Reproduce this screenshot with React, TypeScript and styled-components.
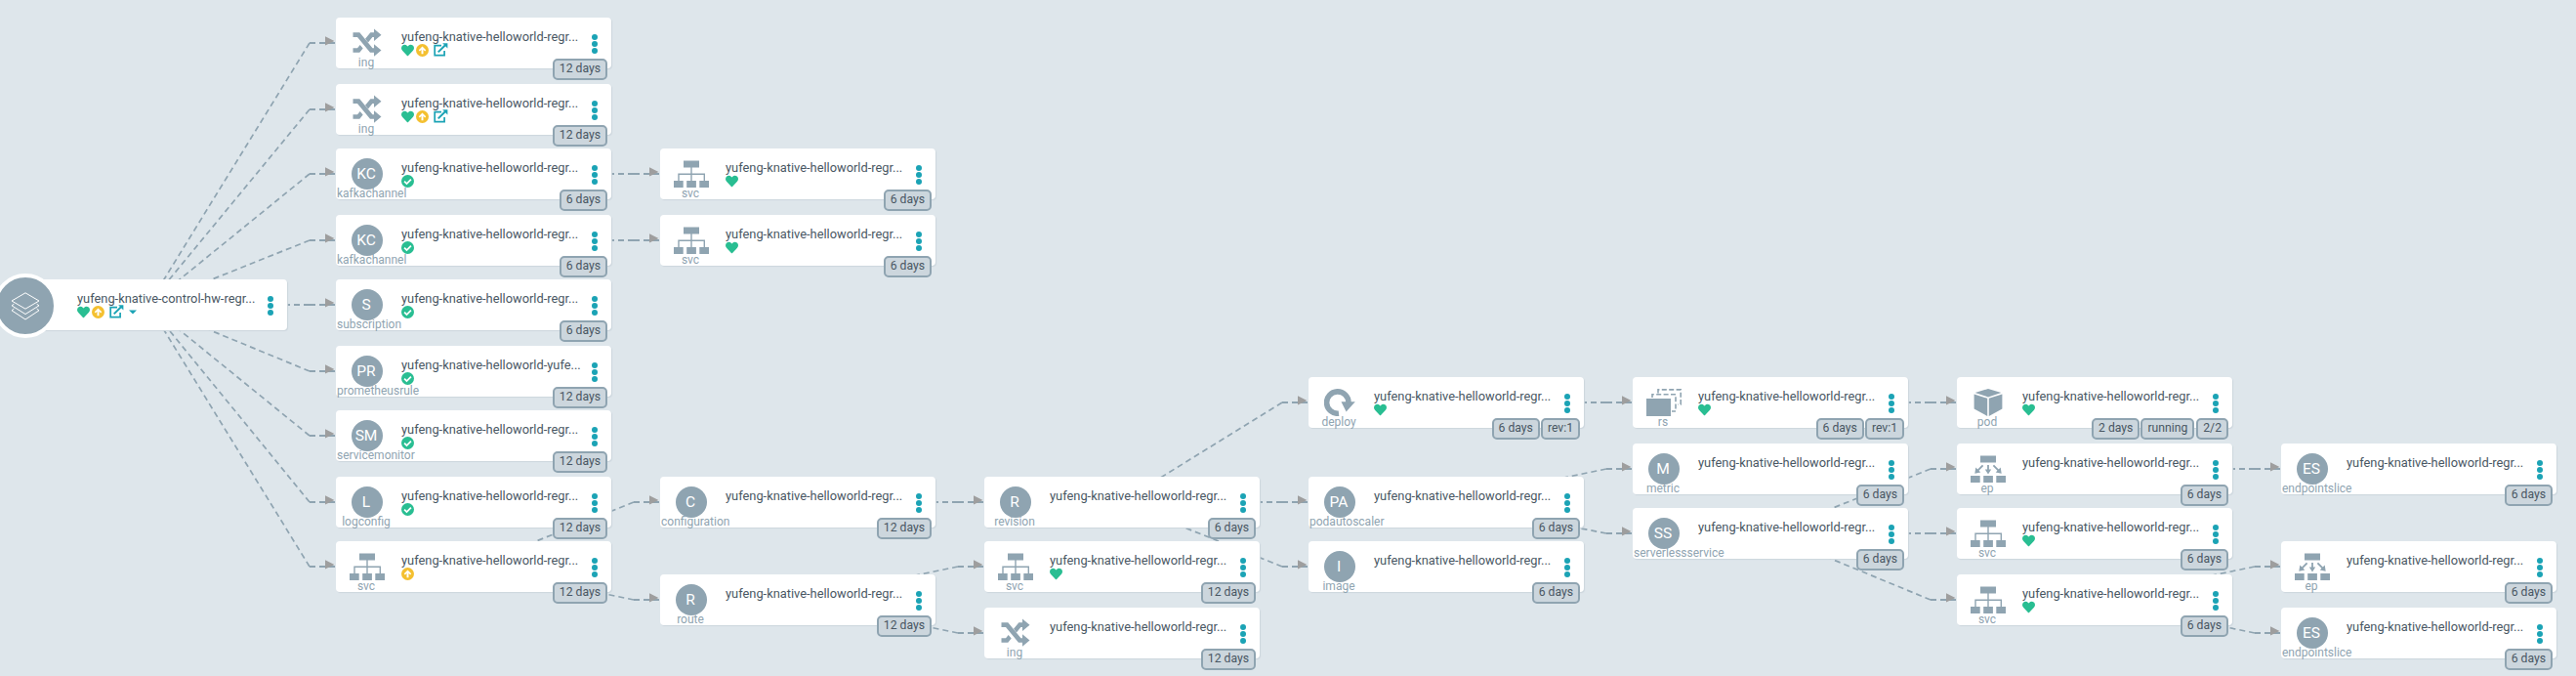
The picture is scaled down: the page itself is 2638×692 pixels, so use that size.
import React from "react";
import styled, { createGlobalStyle } from "styled-components";

const Global = createGlobalStyle`
  * { box-sizing: border-box; }
  html, body { margin: 0; padding: 0; background: #dee6eb; overflow: hidden; }
`;

const SLATE = "#8fa4b1";
const TEAL = "#1ba3b5";

const Canvas = styled.main`
  position: relative;
  width: 2638px;
  height: 692px;
  background: #dee6eb;
  font-family: Roboto, "Liberation Sans", sans-serif;
  overflow: hidden;
`;

const EdgeLayer = styled.svg`
  position: absolute;
  inset: 0;
  display: block;
`;

const Card = styled.article<{ $x: number; $y: number }>`
  position: absolute;
  left: ${(p) => p.$x}px;
  top: ${(p) => p.$y}px;
  width: 282px;
  height: 52px;
  display: flex;
  background: #fff;
  border-radius: 4px;
  box-shadow: 1px 1px 1px #ccd6dd;
`;

const KindColumn = styled.div`
  width: 60px;
  margin-left: 1px;
  padding-top: 10px;
  flex: none;
  display: flex;
  flex-direction: column;
  align-items: center;
`;

const IconSlot = styled.div`
  width: 36px;
  height: 32px;
  margin-left: 2px;
  flex: none;
  display: flex;
  align-items: center;
  justify-content: center;
`;

const Initials = styled.span`
  width: 32px;
  height: 32px;
  padding-right: 2px;
  border-radius: 50%;
  background: ${SLATE};
  color: #fff;
  font-size: 15.5px;
  line-height: 33px;
  text-align: center;
`;

const KindLabel = styled.span`
  max-width: 60px;
  margin-top: -3px;
  font-size: 12px;
  line-height: 14px;
  white-space: nowrap;
  color: ${SLATE};
`;

const RootDisc = styled.div`
  position: absolute;
  left: -19px;
  top: -6px;
  width: 66px;
  height: 66px;
  border: 4px solid #fff;
  border-radius: 50%;
  background: ${SLATE};
  display: flex;
  align-items: center;
  justify-content: center;
`;

const Body = styled.div<{ $root?: boolean }>`
  width: 190px;
  margin-left: ${(p) => (p.$root ? 67 : 6)}px;
  padding-top: 12px;
`;

const Name = styled.div`
  font-size: 12.85px;
  line-height: 16px;
  white-space: nowrap;
  color: #495763;
`;

const StatusRow = styled.div`
  height: 14px;
  margin-top: -2px;
  display: flex;
  align-items: center;
  gap: 2px;
`;

const MenuDots = styled.div`
  margin: 17px 0 0 5px;
  width: 6px;
  display: flex;
  flex-direction: column;
  gap: 1px;
`;

const Dot = styled.i`
  width: 6px;
  height: 6px;
  border-radius: 50%;
  background: ${TEAL};
`;

const Badges = styled.div`
  position: absolute;
  right: 4px;
  top: 42px;
  display: flex;
  gap: 1px;
`;

const Badge = styled.span<{ $spaced?: boolean }>`
  height: 22px;
  padding: 0 5px;
  margin-left: ${(p) => (p.$spaced ? 1 : 0)}px;
  border: 2px solid ${SLATE};
  border-radius: 5px;
  background: #ccd6dd;
  color: #495763;
  font-size: 12.2px;
  line-height: 16px;
  white-space: nowrap;
`;

const Heart = () => (
  <svg width="13" height="13" viewBox="0 0 512 512" fill="#29be92">
    <path d="M462 62c-55-47-136-38-186 14l-20 20-20-20C186 24 105 15 50 62c-63 54-66 150-10 208l194 200c12 13 32 13 44 0l194-200c56-58 53-154-10-208z" />
  </svg>
);

const Synced = () => (
  <svg width="13" height="13" viewBox="0 0 16 16">
    <circle cx="8" cy="8" r="8" fill="#29be92" />
    <path d="M3.8 8.2l3 3 5.4-5.4" fill="none" stroke="#fff" strokeWidth="2.2" />
  </svg>
);

const OutOfSync = () => (
  <svg width="13" height="13" viewBox="0 0 16 16">
    <circle cx="8" cy="8" r="8" fill="#f4c030" />
    <path d="M8 3l4.6 4.8-1.4 1.3-2-2V12.6H6.8V7.1l-2 2-1.4-1.3z" fill="#fff" />
  </svg>
);

const LinkIcon = styled.svg`
  margin-left: 3px;
`;

const External = () => (
  <LinkIcon width="15" height="14" viewBox="0 0 15 14" fill="none" stroke={TEAL}>
    <path d="M8 2.6H1.2v10h9.9V8" strokeWidth="1.7" />
    <path d="M4.7 9.4l7.5-7.4" strokeWidth="2" />
    <path d="M9.2 0.2h5.2v5.2z" fill={TEAL} stroke="none" />
  </LinkIcon>
);

const CaretIcon = styled.svg`
  margin-left: 3px;
`;

const Caret = () => (
  <CaretIcon width="8" height="5" viewBox="0 0 8 5" fill={TEAL}>
    <path d="M0 .4h8L4 4.6z" />
  </CaretIcon>
);

const Shuffle = () => (
  <svg width="30" height="28" viewBox="0 0 30 28" fill={SLATE} overflow="visible">
    <path d="M0.5 3.2h6.8L20.5 19.2h1.5V15.3l7.5 6.2-7.5 6.2V23.8h-4L5 8H0.5z" />
    <path d="M0.5 19.2H5l2.7-3.2 3 3.6-3.4 4.2H0.5z" />
    <path d="M13 9.8L18.4 3.2H22V-.5l7.5 6.2-7.5 6.2V8h-1.6L16 13.4z" />
  </svg>
);

const Service = () => (
  <svg width="36" height="28" viewBox="0 0 36 28" fill={SLATE}>
    <path d="M10 0.5h16v7H10zM0 21h9.7v7H0zM13.2 21h9.7v7h-9.7zM26.3 21H36v7h-9.7z" />
    <path d="M18 7v14M5 21v-6.8h26.3V21" fill="none" stroke={SLATE} strokeWidth="1.4" />
  </svg>
);

const Endpoint = () => (
  <svg width="36" height="28" viewBox="0 0 36 28" fill={SLATE}>
    <path d="M10 0.5h16v7H10zM0 21h9.7v7H0zM13.2 21h9.7v7h-9.7zM26.3 21H36v7h-9.7z" />
    <path d="M12.6 10.3L7.4 15.6M18 10v6M23.4 10.3l5.2 5.3" stroke={SLATE} strokeWidth="1.8" />
    <path d="M4.3 18.8l1-6.2 5 5zM14.8 14.6h6.4L18 19.4zM31.7 18.8l-1-6.2-5 5z" />
  </svg>
);

const Deploy = () => (
  <svg width="32" height="28" viewBox="0 0 32 28">
    <path d="M15 25.2A11.2 11.2 0 1 1 25 14" fill="none" stroke={SLATE} strokeWidth="5.6" />
    <path d="M17.5 13.2h14.3L22.6 23.6z" fill={SLATE} />
  </svg>
);

const ReplicaSet = () => (
  <svg width="36" height="28" viewBox="0 0 36 28">
    <path d="M0 10h25v18H0z" fill={SLATE} />
    <path d="M6 9V5.8h24V23h-4" fill="none" stroke={SLATE} strokeWidth="1.6" strokeDasharray="5 2.4" />
    <path d="M12 4.5V.9h23.2V16h-3" fill="none" stroke={SLATE} strokeWidth="1.6" strokeDasharray="5 2.4" />
  </svg>
);

const Pod = () => (
  <svg width="30" height="28" viewBox="0 0 30 28" fill={SLATE}>
    <path d="M15 0l13.4 4L15 8.4 1.6 4z" />
    <path d="M.6 5.4L14.2 9.8V28L.6 20.4zM29.4 5.4L15.8 9.8V28l13.6-7.6z" />
  </svg>
);

const Layers = () => (
  <svg width="30" height="29" viewBox="0 0 30 29" fill="none" stroke="#fff" strokeWidth="1" strokeLinejoin="round">
    <path d="M15 .8l14 8.2-14 8.2L1 9z" />
    <path d="M3.4 12.2L1 13.8 15 22.6l14-8.8-2.4-1.6" />
    <path d="M3.4 17L1 18.8 15 28l14-9.2-2.4-1.8" />
  </svg>
);

const KIND_ICONS: Record<string, React.FC> = {
  ing: Shuffle,
  svc: Service,
  ep: Endpoint,
  deploy: Deploy,
  rs: ReplicaSet,
  pod: Pod,
};

const STATUS_ICONS: Record<string, React.FC> = {
  heart: Heart,
  synced: Synced,
  outofsync: OutOfSync,
  link: External,
  caret: Caret,
};

interface ResourceNode {
  x: number;
  y: number;
  kind: string;
  initials?: string;
  name?: string;
  status?: string[];
  badges: string[];
}

const SHORT = "yufeng-knative-helloworld-regr...";

const nodes: ResourceNode[] = [
  { x: 344, y: 18, kind: "ing", status: ["heart", "outofsync", "link"], badges: ["12 days"] },
  { x: 344, y: 86, kind: "ing", status: ["heart", "outofsync", "link"], badges: ["12 days"] },
  { x: 344, y: 152, kind: "kafkachannel", initials: "KC", status: ["synced"], badges: ["6 days"] },
  { x: 344, y: 220, kind: "kafkachannel", initials: "KC", status: ["synced"], badges: ["6 days"] },
  { x: 344, y: 286, kind: "subscription", initials: "S", status: ["synced"], badges: ["6 days"] },
  { x: 344, y: 354, kind: "prometheusrule", initials: "PR", name: "yufeng-knative-helloworld-yufe...", status: ["synced"], badges: ["12 days"] },
  { x: 344, y: 420, kind: "servicemonitor", initials: "SM", status: ["synced"], badges: ["12 days"] },
  { x: 344, y: 488, kind: "logconfig", initials: "L", status: ["synced"], badges: ["12 days"] },
  { x: 344, y: 554, kind: "svc", status: ["outofsync"], badges: ["12 days"] },
  { x: 676, y: 152, kind: "svc", status: ["heart"], badges: ["6 days"] },
  { x: 676, y: 220, kind: "svc", status: ["heart"], badges: ["6 days"] },
  { x: 676, y: 488, kind: "configuration", initials: "C", badges: ["12 days"] },
  { x: 676, y: 588, kind: "route", initials: "R", badges: ["12 days"] },
  { x: 1008, y: 488, kind: "revision", initials: "R", badges: ["6 days"] },
  { x: 1008, y: 554, kind: "svc", status: ["heart"], badges: ["12 days"] },
  { x: 1008, y: 622, kind: "ing", badges: ["12 days"] },
  { x: 1340, y: 386, kind: "deploy", status: ["heart"], badges: ["6 days", "rev:1"] },
  { x: 1340, y: 488, kind: "podautoscaler", initials: "PA", badges: ["6 days"] },
  { x: 1340, y: 554, kind: "image", initials: "I", badges: ["6 days"] },
  { x: 1672, y: 386, kind: "rs", status: ["heart"], badges: ["6 days", "rev:1"] },
  { x: 1672, y: 454, kind: "metric", initials: "M", badges: ["6 days"] },
  { x: 1672, y: 520, kind: "serverlessservice", initials: "SS", badges: ["6 days"] },
  { x: 2004, y: 386, kind: "pod", status: ["heart"], badges: ["2 days", "running", "2/2"] },
  { x: 2004, y: 454, kind: "ep", badges: ["6 days"] },
  { x: 2004, y: 520, kind: "svc", status: ["heart"], badges: ["6 days"] },
  { x: 2004, y: 588, kind: "svc", status: ["heart"], badges: ["6 days"] },
  { x: 2336, y: 454, kind: "endpointslice", initials: "ES", badges: ["6 days"] },
  { x: 2336, y: 554, kind: "ep", badges: ["6 days"] },
  { x: 2336, y: 622, kind: "endpointslice", initials: "ES", badges: ["6 days"] },
];

/* Each edge: parent left/top, child left/top. */
const edges: [number, number, number, number][] = [
  ...[18, 86, 152, 220, 286, 354, 420, 488, 554].map(
    (y) => [12, 286, 344, y] as [number, number, number, number]
  ),
  [344, 152, 676, 152],
  [344, 220, 676, 220],
  [344, 554, 676, 488],
  [344, 554, 676, 588],
  [676, 488, 1008, 488],
  [676, 588, 1008, 554],
  [676, 588, 1008, 622],
  [1008, 488, 1340, 386],
  [1008, 488, 1340, 488],
  [1008, 488, 1340, 554],
  [1340, 386, 1672, 386],
  [1340, 488, 1672, 454],
  [1340, 488, 1672, 520],
  [1672, 386, 2004, 386],
  [1672, 520, 2004, 454],
  [1672, 520, 2004, 520],
  [1672, 520, 2004, 588],
  [2004, 454, 2336, 454],
  [2004, 588, 2336, 554],
  [2004, 588, 2336, 622],
];

const Edge = ({ e }: { e: [number, number, number, number] }) => {
  const [px, py, cx, cy] = e;
  const y = cy + 26;
  const bend = cx - 27;
  return (
    <g stroke={SLATE} strokeWidth={py === cy ? 2 : 1.7} fill="none">
      <path d={`M${bend} ${y}L${px + 140} ${py + 26}`} strokeDasharray="6 4" />
      <path d={`M${bend} ${y}H${bend + 6}M${bend + 10} ${y}H${cx - 1}`} strokeWidth="2" />
      <path d={`M${cx - 11} ${cy + 19.2}v9.4l9.4-4.6z`} fill="#9e9e9e" stroke="none" />
    </g>
  );
};

const Menu = () => (
  <MenuDots>
    <Dot />
    <Dot />
    <Dot />
  </MenuDots>
);

const Statuses = ({ items = [] }: { items?: string[] }) => (
  <StatusRow>
    {items.map((s) => {
      const Icon = STATUS_ICONS[s];
      return <Icon key={s} />;
    })}
  </StatusRow>
);

const ResourceCard = ({ node }: { node: ResourceNode }) => {
  const Icon = KIND_ICONS[node.kind];
  return (
    <Card $x={node.x} $y={node.y}>
      <KindColumn>
        <IconSlot>{Icon ? <Icon /> : <Initials>{node.initials}</Initials>}</IconSlot>
        <KindLabel>{node.kind}</KindLabel>
      </KindColumn>
      <Body>
        <Name>{node.name ?? SHORT}</Name>
        <Statuses items={node.status} />
      </Body>
      <Menu />
      <Badges>
        {node.badges.map((b) => (
          <Badge key={b} $spaced={b === "2/2"}>
            {b}
          </Badge>
        ))}
      </Badges>
    </Card>
  );
};

export default function App() {
  return (
    <Canvas>
      <Global />
      <EdgeLayer width="2638" height="692">
        {edges.map((e) => (
          <Edge key={e.join("-")} e={e} />
        ))}
      </EdgeLayer>
      <Card $x={12} $y={286}>
        <RootDisc>
          <Layers />
        </RootDisc>
        <Body $root>
          <Name>yufeng-knative-control-hw-regr...</Name>
          <Statuses items={["heart", "outofsync", "link", "caret"]} />
        </Body>
        <Menu />
      </Card>
      {nodes.map((n) => (
        <ResourceCard key={`${n.x}-${n.y}`} node={n} />
      ))}
    </Canvas>
  );
}
